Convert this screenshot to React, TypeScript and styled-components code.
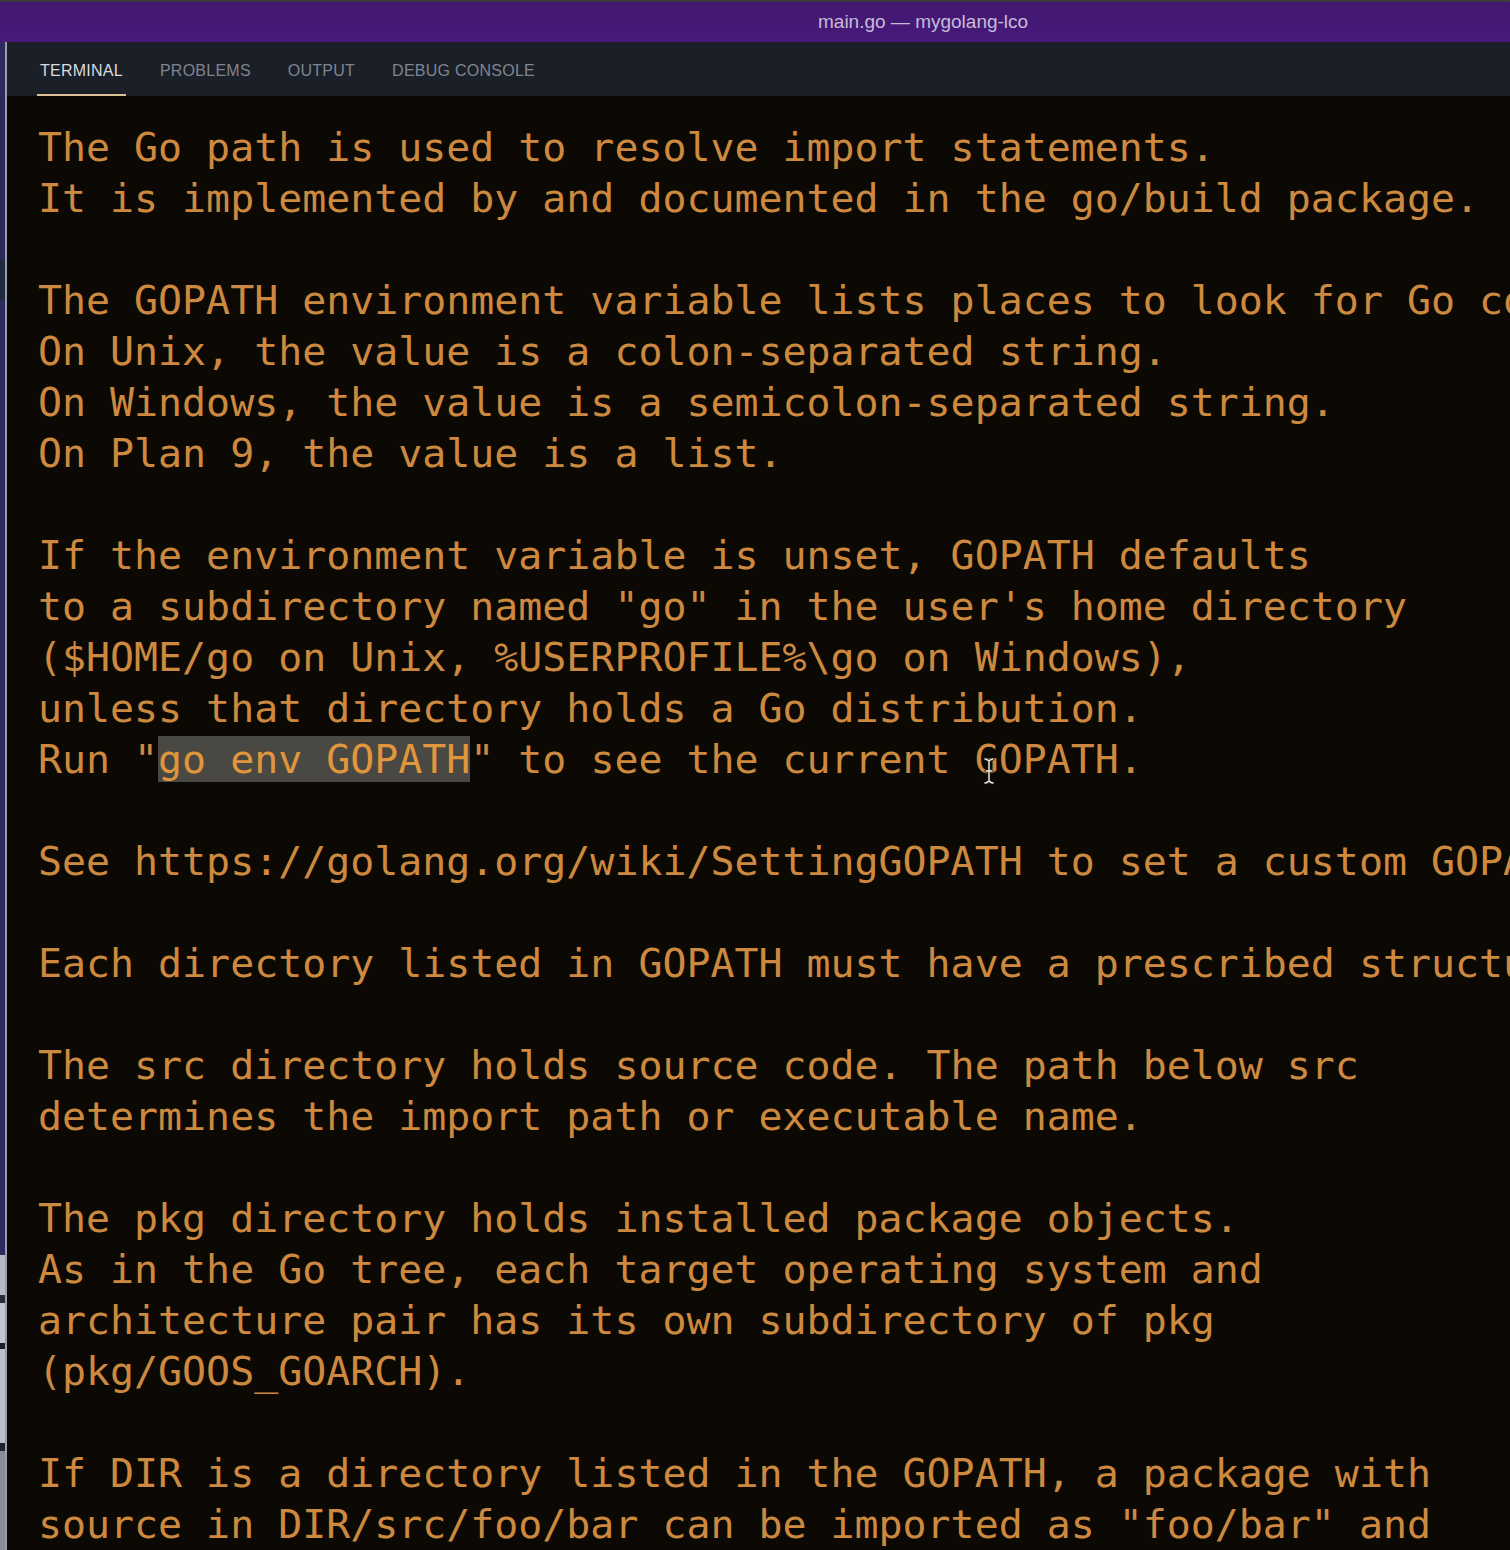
import React from "react";
import styled, { createGlobalStyle } from "styled-components";

const Global = createGlobalStyle`
  html, body {
    margin: 0;
    padding: 0;
    width: 1510px;
    height: 1550px;
    overflow: hidden;
    background: #0c0904;
  }
  #root { width: 1510px; height: 1550px; }
`;

const Window = styled.div`
  width: 1510px;
  height: 1550px;
  display: flex;
  flex-direction: column;
  overflow: hidden;
  background: #0c0904;
`;

const TitleBar = styled.div`
  height: 42px;
  flex: none;
  border-top: 2px solid #3b3a40;
  background: linear-gradient(#42186f, #47197c);
  display: flex;
  align-items: center;
  padding-left: 818px;
  font-family: "Liberation Sans", Arial, sans-serif;
  font-size: 19px;
  color: #c7bcd6;
  box-sizing: border-box;
`;

const Body = styled.div`
  flex: 1;
  display: flex;
  min-height: 0;
`;

const SideStrip = styled.div`
  width: 5px;
  flex: none;
  display: flex;
  flex-direction: column;
`;

const StripSeg = styled.div<{ $h: number; $c: string }>`
  height: ${(p) => p.$h}px;
  flex: none;
  background: ${(p) => p.$c};
`;

const Divider = styled.div`
  width: 2px;
  flex: none;
  background: #9b9bb0;
`;

const Panel = styled.div`
  flex: 1;
  display: flex;
  flex-direction: column;
  min-width: 0;
`;

const TabBar = styled.div`
  height: 54px;
  flex: none;
  background: #1b1f27;
  display: flex;
  align-items: stretch;
  gap: 31px;
  padding-left: 30px;
  box-sizing: border-box;
`;

const Tab = styled.div<{ $active?: boolean }>`
  padding: 5px 3px 0;
  display: flex;
  align-items: center;
  font-family: "Liberation Sans", Arial, sans-serif;
  font-size: 16px;
  letter-spacing: 0.25px;
  color: ${(p) => (p.$active ? "#d9dade" : "#7f8590")};
  border-bottom: 2px solid ${(p) => (p.$active ? "#dcc197" : "transparent")};
  box-sizing: border-box;
`;

const Terminal = styled.div`
  position: relative;
  flex: 1;
  background: #0c0904;
  padding: 26px 0 0 31px;
  overflow: hidden;
`;

const Line = styled.div`
  font-family: "DejaVu Sans Mono", Menlo, monospace;
  font-size: 39.9px;
  line-height: 51px;
  height: 51px;
  white-space: pre;
  color: #cd893f;
`;

const Selection = styled.span`
  background: #4a4842;
  color: #e0963c;
`;

const Cursor = styled.svg`
  position: absolute;
  left: 975px;
  top: 661px;
`;

const lines: React.ReactNode[] = [
  "The Go path is used to resolve import statements.",
  "It is implemented by and documented in the go/build package.",
  "",
  "The GOPATH environment variable lists places to look for Go code.",
  "On Unix, the value is a colon-separated string.",
  "On Windows, the value is a semicolon-separated string.",
  "On Plan 9, the value is a list.",
  "",
  "If the environment variable is unset, GOPATH defaults",
  'to a subdirectory named "go" in the user\'s home directory',
  "($HOME/go on Unix, %USERPROFILE%\\go on Windows),",
  "unless that directory holds a Go distribution.",
  <>
    Run "<Selection>go env GOPATH</Selection>" to see the current GOPATH.
  </>,
  "",
  "See https://golang.org/wiki/SettingGOPATH to set a custom GOPATH.",
  "",
  "Each directory listed in GOPATH must have a prescribed structure:",
  "",
  "The src directory holds source code. The path below src",
  "determines the import path or executable name.",
  "",
  "The pkg directory holds installed package objects.",
  "As in the Go tree, each target operating system and",
  "architecture pair has its own subdirectory of pkg",
  "(pkg/GOOS_GOARCH).",
  "",
  "If DIR is a directory listed in the GOPATH, a package with",
  'source in DIR/src/foo/bar can be imported as "foo/bar" and',
  'have its compiled form installed to "DIR/pkg/GOOS_GOARCH/foo/bar.a".',
];

const strip: [number, string][] = [
  [218, "#2b2a5a"],
  [40, "#1f2a3a"],
  [955, "#2c2a5e"],
  [40, "#b9b9c4"],
  [8, "#2a2a3a"],
  [40, "#c4c4cc"],
  [6, "#1e1e2a"],
  [94, "#bdbdc6"],
  [8, "#22222e"],
  [100, "#8c8c98"],
];

export default function App() {
  return (
    <>
      <Global />
      <Window>
        <TitleBar>main.go — mygolang-lco</TitleBar>
        <Body>
          <SideStrip>
            {strip.map(([h, c], i) => (
              <StripSeg key={i} $h={h} $c={c} />
            ))}
          </SideStrip>
          <Divider />
          <Panel>
            <TabBar>
              <Tab $active>TERMINAL</Tab>
              <Tab>PROBLEMS</Tab>
              <Tab>OUTPUT</Tab>
              <Tab>DEBUG CONSOLE</Tab>
            </TabBar>
            <Terminal>
              {lines.map((l, i) => (
                <Line key={i}>{l === "" ? " " : l}</Line>
              ))}
              <Cursor width="14" height="28" viewBox="0 0 14 28">
                <path
                  d="M3 2 C5 2 6 3 7 4 C8 3 9 2 11 2 M7 4 V24 M3 26 C5 26 6 25 7 24 C8 25 9 26 11 26 M4 14 H10"
                  fill="none"
                  stroke="#1a1a1a"
                  strokeWidth="3.2"
                  strokeLinecap="round"
                />
                <path
                  d="M3 2 C5 2 6 3 7 4 C8 3 9 2 11 2 M7 4 V24 M3 26 C5 26 6 25 7 24 C8 25 9 26 11 26 M4 14 H10"
                  fill="none"
                  stroke="#f2efe8"
                  strokeWidth="1.4"
                  strokeLinecap="round"
                />
              </Cursor>
            </Terminal>
          </Panel>
        </Body>
      </Window>
    </>
  );
}
